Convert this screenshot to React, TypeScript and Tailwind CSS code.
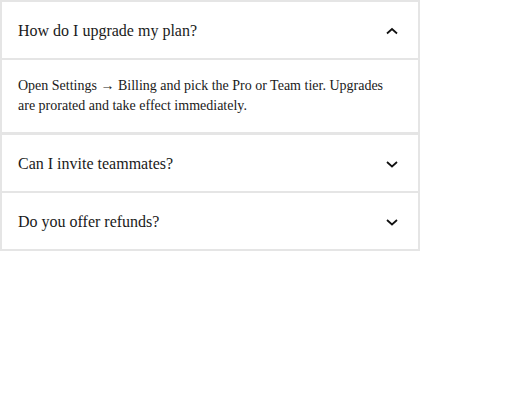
import { useState } from "react";

const ITEMS: { q: string; a: string }[] = [
  {
    q: "How do I upgrade my plan?",
    a: "Open Settings \u2192 Billing and pick the Pro or Team tier. Upgrades are prorated and take effect immediately.",
  },
  {
    q: "Can I invite teammates?",
    a: "Yes. Go to Settings \u2192 Members and send an invite by email.",
  },
  {
    q: "Do you offer refunds?",
    a: "Refunds are available within 14 days of purchase.",
  },
];

function Chevron({ up }: { up: boolean }) {
  return (
    <svg width="16" height="16" viewBox="0 0 16 16" fill="none" className="shrink-0">
      <polyline
        points={up ? "3,10.5 8,6 13,10.5" : "3,6 8,10.5 13,6"}
        stroke="#111"
        strokeWidth="1.75"
      />
    </svg>
  );
}

export default function App() {
  const [open, setOpen] = useState<number | null>(0);

  return (
    <div className="min-h-[400px] bg-white font-['Liberation_Serif','Times_New_Roman',serif] text-[#1a1a1a]">
      <div className="flex w-[420px] flex-col gap-[2px] bg-[#e5e5e5] p-[2px]">
        {ITEMS.map((item, i) => (
          <div key={item.q} className="flex flex-col gap-[2px]">
            <button
              type="button"
              onClick={() => setOpen(open === i ? null : i)}
              className="flex h-14 items-center justify-between bg-white pl-4 pr-[18px] pt-[2px] text-left text-base leading-6"
            >
              <span>{item.q}</span>
              <Chevron up={open === i} />
            </button>
            {open === i && (
              <div className="border-b border-[#e5e5e5] bg-white px-4 py-4 text-sm leading-5">
                {item.a}
              </div>
            )}
          </div>
        ))}
      </div>
    </div>
  );
}
